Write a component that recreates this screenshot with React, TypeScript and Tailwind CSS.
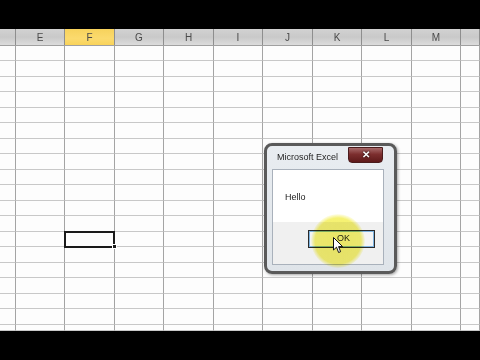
const COLS = [
  { w: 16, label: "" },
  { w: 49, label: "E" },
  { w: 50, label: "F" },
  { w: 49, label: "G" },
  { w: 50, label: "H" },
  { w: 49, label: "I" },
  { w: 50, label: "J" },
  { w: 49, label: "K" },
  { w: 50, label: "L" },
  { w: 49, label: "M" },
  { w: 19, label: "" },
];

// 18 full rows + one cut-off row at the bottom
const ROWS = Array.from({ length: 19 }, (_, i) => (i === 18 ? 6 : i % 2 === 0 ? 15 : 16));

export default function App() {
  return (
    <div
      className="relative flex h-[360px] w-[480px] flex-col overflow-hidden bg-black"
      style={{ fontFamily: '"Liberation Sans", Arial, sans-serif' }}
    >
      <div className="h-[29px] shrink-0 bg-black" />

      <div className="flex h-[17px] shrink-0 bg-[linear-gradient(to_bottom,#d2d2d2,#c9c9c9_50%,#dcdcdc)] border-b border-[#a0a0a0]">
        {COLS.map((c, i) => (
          <div
            key={i}
            style={{ width: c.w }}
            className={`flex shrink-0 items-center justify-center border-r border-[#8e8e8e] text-[10px] text-[#4a4a4a] ${
              c.label === "F" ? "bg-[linear-gradient(to_bottom,#f7d25c,#fbda6e_60%,#f9d35a)]" : ""
            }`}
          >
            {c.label}
          </div>
        ))}
      </div>

      <div className="flex shrink-0 flex-col bg-[#fdfdfd]">
        {ROWS.map((h, r) => (
          <div key={r} className="flex" style={{ height: h }}>
            {COLS.map((c, i) => (
              <div
                key={i}
                style={{ width: c.w }}
                className={`relative shrink-0 border-r border-b border-r-[#a4a4a4] border-b-[#c8c8c8] ${
                  r === 12 && c.label === "F" ? "z-10" : ""
                }`}
              >
                {r === 12 && c.label === "F" && (
                  <>
                    <div className="absolute -left-px -top-px h-[17px] w-[51px] border-2 border-[#1a1a1a]" />
                    <div className="absolute -bottom-[3px] -right-[3px] h-[5px] w-[5px] border border-white bg-[#1a1a1a]" />
                  </>
                )}
              </div>
            ))}
          </div>
        ))}
      </div>

      <div className="flex-1 bg-black" />

      {/* Message box */}
      <div className="absolute left-[264px] top-[143px] h-[131px] w-[133px] rounded-[8px] border-[3px] border-[#5a5a5a] bg-[linear-gradient(to_bottom,#e9edf1,#dfe4e9)] shadow-[1px_1px_3px_rgba(0,0,0,0.35)]">
        <div className="flex h-[22px] items-center justify-between pl-[10px] pr-[11px] pt-[1px]">
          <span className="text-[9px] text-[#1e1e1e]">Microsoft Excel</span>
          <div className="flex h-[16px] w-[35px] items-center justify-center self-start rounded-b-[4px] border border-[#4a1c1c] bg-[linear-gradient(to_bottom,#a86a6a,#7c2e2e_45%,#5e1a1a)]">
            <span className="text-[10px] font-bold leading-none text-white [text-shadow:0_0_2px_#000]">✕</span>
          </div>
        </div>
        <div className="ml-[5px] mt-[1px] flex h-[96px] w-[112px] flex-col border border-[#a9b1bb] bg-white">
          <div className="flex h-[52px] items-center pl-[12px] pt-[4px]">
            <span className="text-[9px] text-[#1e1e1e]">Hello</span>
          </div>
          <div className="flex flex-1 items-start bg-[#f0f0f0] pl-[35px] pt-[8px]">
            <div className="flex h-[18px] w-[67px] items-center justify-center border border-[#2a2a2a] bg-[#f4f4f4] shadow-[inset_0_0_0_1px_#7fb4e0]">
              <span className="pl-[4px] text-[9px] text-[#1e1e1e]">OK</span>
            </div>
          </div>
        </div>
      </div>

      {/* cursor highlight */}
      <div className="pointer-events-none absolute left-[311px] top-[214px] h-[54px] w-[54px] rounded-full mix-blend-multiply bg-[radial-gradient(circle,rgba(243,238,80,0.85)_0%,rgba(243,238,80,0.8)_60%,rgba(243,238,80,0)_72%)]" />

      <svg className="absolute left-[333px] top-[237px]" width="11" height="17" viewBox="0 0 11 17">
        <path d="M0.5 0.5 L0.5 13 L3.5 10.2 L5.6 15.5 L7.6 14.7 L5.6 9.6 L9.6 9.6 Z" fill="#fff" stroke="#111" strokeWidth="1" strokeLinejoin="round" />
      </svg>
    </div>
  );
}
